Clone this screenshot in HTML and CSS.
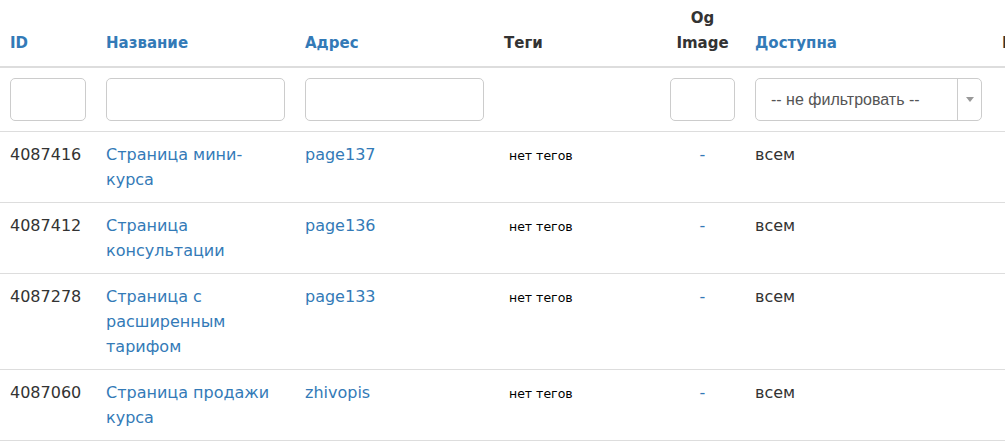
FILE: index.html
```html
<!DOCTYPE html>
<html lang="ru">
<head>
<meta charset="UTF-8" />
<title>Страницы</title>
<link rel="stylesheet" href="styles.css">
</head>
<body>

<table class="grid">
  <colgroup>
    <col class="c-id">
    <col class="c-name">
    <col class="c-url">
    <col class="c-tags">
    <col class="c-og">
    <col class="c-access">
    <col class="c-more">
  </colgroup>
  <thead>
    <tr>
      <th><a href="#">ID</a></th>
      <th><a href="#">Название</a></th>
      <th><a href="#">Адрес</a></th>
      <th>Теги</th>
      <th class="center">Og Image</th>
      <th><a href="#">Доступна</a></th>
      <th>Редактор</th>
    </tr>
    <tr class="filters">
      <td><input type="text" class="field"></td>
      <td><input type="text" class="field"></td>
      <td><input type="text" class="field"></td>
      <td></td>
      <td><input type="text" class="field"></td>
      <td>
        <div class="select">
          <span class="select-text">-- не фильтровать --</span>
          <span class="select-arrow"></span>
        </div>
      </td>
      <td></td>
    </tr>
  </thead>
  <tbody>
    <tr>
      <td>4087416</td>
      <td><a href="#">Страница мини-курса</a></td>
      <td><a href="#">page137</a></td>
      <td><span class="tags">нет тегов</span></td>
      <td class="center"><a href="#">-</a></td>
      <td>всем</td>
      <td></td>
    </tr>
    <tr>
      <td>4087412</td>
      <td><a href="#">Страница консультации</a></td>
      <td><a href="#">page136</a></td>
      <td><span class="tags">нет тегов</span></td>
      <td class="center"><a href="#">-</a></td>
      <td>всем</td>
      <td></td>
    </tr>
    <tr>
      <td>4087278</td>
      <td><a href="#">Страница с расширенным тарифом</a></td>
      <td><a href="#">page133</a></td>
      <td><span class="tags">нет тегов</span></td>
      <td class="center"><a href="#">-</a></td>
      <td>всем</td>
      <td></td>
    </tr>
    <tr>
      <td>4087060</td>
      <td><a href="#">Страница продажи курса</a></td>
      <td><a href="#">zhivopis</a></td>
      <td><span class="tags">нет тегов</span></td>
      <td class="center"><a href="#">-</a></td>
      <td>всем</td>
      <td></td>
    </tr>
  </tbody>
</table>

</body>
</html>
```

FILE: styles.css
```css
body {
  margin: 0;
  font-family: 'DejaVu Sans', sans-serif;
  font-size: 16px;
  line-height: 25px;
  color: #333;
  background: #fff;
  overflow: hidden;
}
a {
  color: #337ab7;
  text-decoration: none;
}
.grid {
  border-collapse: collapse;
  table-layout: fixed;
  width: 1100px;
}
.c-id { width: 96px; }
.c-name { width: 199px; }
.c-url { width: 199px; }
.c-tags { width: 166px; }
.c-og { width: 85px; }
.c-access { width: 247px; }
.c-more { width: 108px; }
th {
  font-size: 15px;
  font-weight: bold;
  text-align: left;
  vertical-align: bottom;
  padding: 6px 10px 10px;
  border-bottom: 2px solid #ddd;
  color: #333;
}
td {
  vertical-align: top;
  padding: 10px;
  border-bottom: 1px solid #ddd;
}
.center {
  text-align: center;
}
.field {
  box-sizing: border-box;
  display: block;
  width: 100%;
  height: 43px;
  border: 1px solid #ccc;
  border-radius: 5px;
  padding: 6px 12px;
  font-size: 15px;
}
.select {
  box-sizing: border-box;
  display: flex;
  height: 43px;
  border: 1px solid #ccc;
  border-radius: 5px;
  font-family: 'Liberation Sans', sans-serif;
  font-size: 16px;
  color: #555;
}
.select-text {
  flex: 1;
  padding: 0 15px;
  line-height: 41px;
}
.select-arrow {
  width: 23px;
  border-left: 1px solid #ccc;
  position: relative;
}
.select-arrow::after {
  content: "";
  position: absolute;
  left: 8px;
  top: 18px;
  border-left: 4px solid transparent;
  border-right: 4px solid transparent;
  border-top: 5px solid #999;
}
.tags {
  display: inline-block;
  margin-left: 5px;
  font-size: 12.5px;
  color: #000;
}
```
